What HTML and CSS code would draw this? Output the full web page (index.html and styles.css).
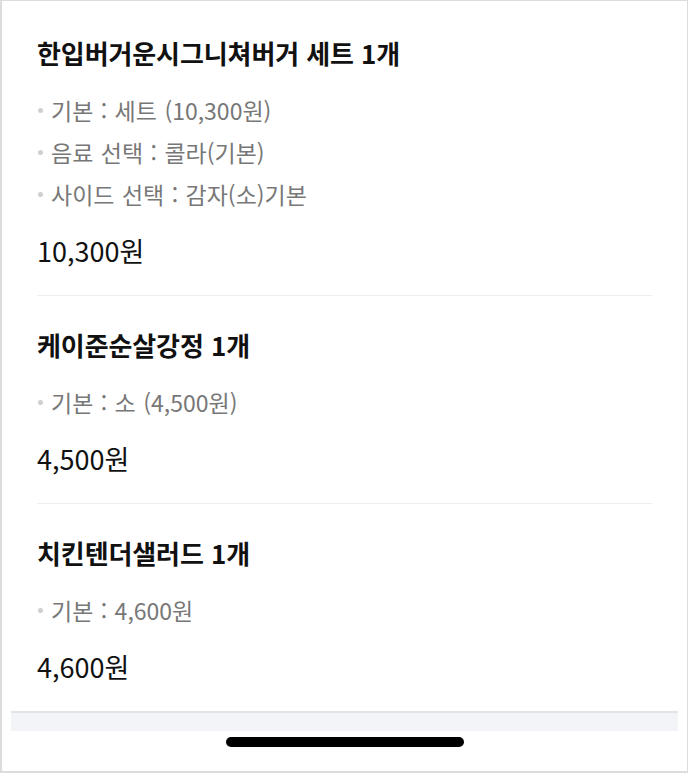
FILE: index.html
```html
<!DOCTYPE html>
<html lang="ko">
<head>
<meta charset="utf-8">
<link rel="stylesheet" href="styles.css">
</head>
<body>
<div class="frame">
  <div class="list">
    <section class="item">
      <h2 class="title">한입버거운시그니쳐버거 세트 1개</h2>
      <ul class="opts">
        <li>기본 : 세트 (10,300원)</li>
        <li>음료 선택 : 콜라(기본)</li>
        <li>사이드 선택 : 감자(소)기본</li>
      </ul>
      <div class="price">10,300원</div>
    </section>
    <section class="item">
      <h2 class="title">케이준순살강정 1개</h2>
      <ul class="opts">
        <li>기본 : 소 (4,500원)</li>
      </ul>
      <div class="price">4,500원</div>
    </section>
    <section class="item last">
      <h2 class="title">치킨텐더샐러드 1개</h2>
      <ul class="opts">
        <li>기본 : 4,600원</li>
      </ul>
      <div class="price">4,600원</div>
    </section>
  </div>
  <div class="band"></div>
  <div class="home"><span class="bar"></span></div>
</div>
</body>
</html>
```
FILE: styles.css
```css
* { box-sizing: border-box; }
html, body { margin: 0; padding: 0; background: #fff; }
body {
  font-family: "Noto Sans CJK KR", "Noto Sans", sans-serif;
  color: #111;
}
.frame {
  width: 688px;
  height: 773px;
  border: 1px solid #dcdcdc;
  border-left-width: 2px;
  border-bottom-width: 2px;
  display: flex;
  flex-direction: column;
  overflow: hidden;
}
.list {
  padding: 3px 35px 0 35px;
}
.item {
  padding: 33px 0 28px;
  border-bottom: 1px solid #eeeeee;
}
.item.last { border-bottom: none; }
.title {
  margin: 0;
  font-size: 26px;
  line-height: 32px;
  font-weight: 700;
  color: #111;
  letter-spacing: -0.1px;
}
.opts {
  list-style: none;
  margin: 20px 0 0;
  padding: 0;
}
.opts li {
  position: relative;
  font-size: 23px;
  line-height: 42px;
  color: #777;
  padding-left: 14px;
  word-spacing: 1px;
}
.opts li::before {
  content: "";
  position: absolute;
  left: 1px;
  top: 19px;
  width: 5px;
  height: 5px;
  border-radius: 50%;
  background: #cfcfcf;
}
.price {
  margin-top: 20px;
  font-size: 27px;
  line-height: 32px;
  color: #111;
  letter-spacing: 0;
}
.band {
  margin: 0 9px;
  height: 20px;
  border-top: 2px solid #e2e4e8;
  background: #f3f4f8;
}
.home {
  display: flex;
  justify-content: center;
  padding-top: 6px;
}
.bar {
  display: block;
  width: 238px;
  height: 10px;
  border-radius: 5px;
  background: #000;
}
```
